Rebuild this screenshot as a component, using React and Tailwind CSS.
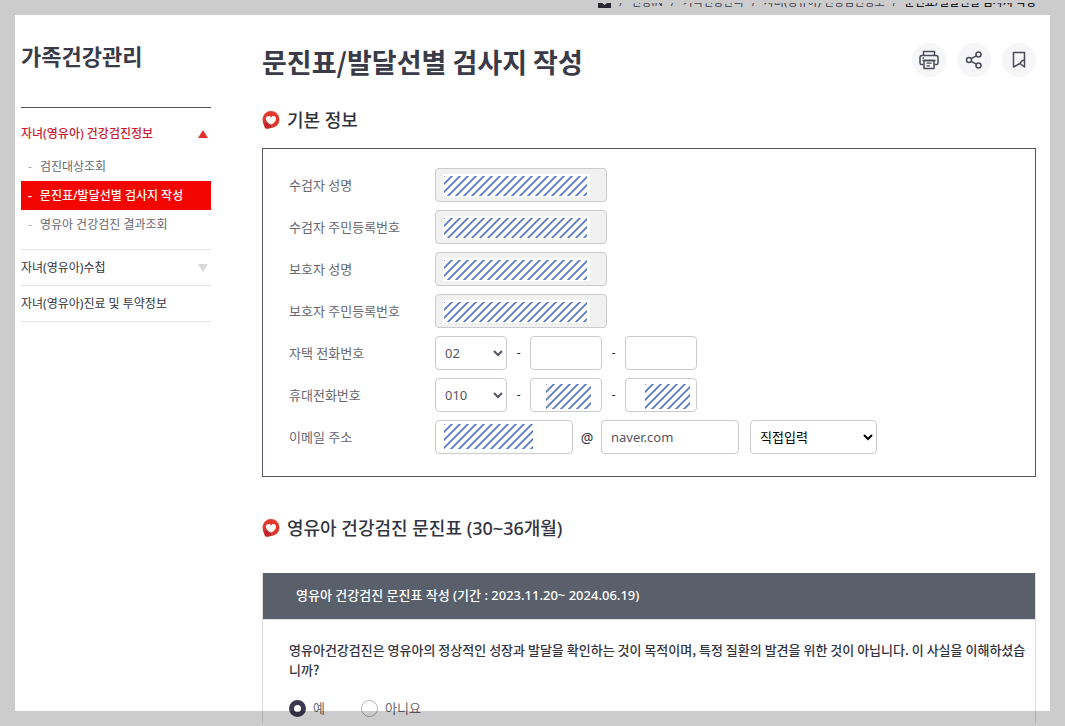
import React, { useId } from "react";

const SectionIcon = () => (
  <svg className="w-[18px] h-[18px] shrink-0" viewBox="0 0 18 18" aria-hidden="true">
    <circle cx="9" cy="8.6" r="8.5" fill="#df3a30" />
    <path d="M1.2 12L3 17.2C5.5 18.2 8 17.8 9.5 16L9 14L4.5 11Z" fill="#c3242b" />
    <path
      d="M9 13.6C5.8 12.2 4 10.2 4 7.8C4 6.1 5.1 5 6.6 5C7.7 5 8.6 5.6 9 6.5C9.4 5.6 10.3 5 11.4 5C12.9 5 14 6.1 14 7.8C14 10.2 12.2 12.2 9 13.6Z"
      fill="#fff"
    />
  </svg>
);

const PrintIcon = () => (
  <svg width="20" height="20" viewBox="0 0 20 20" fill="none" stroke="#4a4b5a" strokeWidth="1.5" strokeLinejoin="round">
    <path d="M4.5 5.5V1.5H15.5V5.5" />
    <path d="M4.5 14.5H2.5C1.5 14.5 1 14 1 13V7.5C1 6.3 1.7 5.5 3 5.5H17C18.3 5.5 19 6.3 19 7.5V13C19 14 18.5 14.5 17.5 14.5H15.5" />
    <path d="M5 10.5H15V18.5H5Z" />
    <path d="M3.5 10.5H16.5M7.5 13.2H12.5M7.5 15.8H11M3.5 8H5" strokeWidth="1.3" />
  </svg>
);

const ShareIcon = () => (
  <svg width="18" height="18" viewBox="0 0 18 18" fill="none" stroke="#4a4b5a" strokeWidth="1.5">
    <circle cx="4" cy="9" r="2.5" />
    <circle cx="13.5" cy="3.5" r="2.5" />
    <circle cx="13.5" cy="14.5" r="2.5" />
    <path d="M6.2 7.7L11.3 4.8M6.2 10.3L11.3 13.2" />
  </svg>
);

const BookmarkIcon = () => (
  <svg width="18" height="18" viewBox="0 0 18 18" fill="none" stroke="#4a4b5a" strokeWidth="1.5" strokeLinejoin="round">
    <path d="M3.5 1.5H14.5V16L10 12.5L3.5 16Z" />
    <path d="M14.5 9C12.5 9 11 10.5 10 12.5" />
  </svg>
);

const tools = [
  { label: "인쇄", icon: <PrintIcon /> },
  { label: "공유", icon: <ShareIcon /> },
  { label: "북마크", icon: <BookmarkIcon /> },
];

const crumbs = ["건강iN", "가족건강관리", "자녀(영유아) 건강검진정보"];

const subMenu = [
  { label: "검진대상조회" },
  { label: "문진표/발달선별 검사지 작성", active: true },
  { label: "영유아 건강검진 결과조회" },
];

const lockedFields = ["수검자 성명", "수검자 주민등록번호", "보호자 성명", "보호자 주민등록번호"];

const FIELD = "h-[34px] border border-[#cbcbcd] rounded text-[13px] text-[#55565f]";

const Hatch = ({ className }) => {
  const id = useId();
  return (
    <svg className={`absolute pointer-events-none ${className}`} aria-hidden="true">
      <pattern id={id} width="8" height="8" patternUnits="userSpaceOnUse">
        <path d="M-2 2L2 -2M-1 9L9 -1M6 10L10 6" stroke="#5b7cc8" strokeWidth="1.9" />
      </pattern>
      <rect width="100%" height="100%" fill={`url(#${id})`} />
    </svg>
  );
};

const Row = ({ label, htmlFor, children }) => (
  <div className="flex items-center">
    <label htmlFor={htmlFor} className="w-[146px] shrink-0 text-[13px] leading-5 text-[#66676f]">
      {label}
    </label>
    {children}
  </div>
);

const PhoneRow = ({ label, id, code, masked }) => (
  <Row label={label} htmlFor={id}>
    <select id={id} className={`${FIELD} w-[72px] pl-[5px] pr-0 bg-white`}>
      <option>{code}</option>
    </select>
    <span className="w-[23px] text-center text-[13px] text-[#33343f]">-</span>
    <div className="relative">
      <input aria-label={`${label} 가운데 자리`} className={`${FIELD} block w-[72px] px-2 bg-white`} />
      {masked && <Hatch className="left-4 top-1.5 w-[45px] h-[25px]" />}
    </div>
    <span className="w-[23px] text-center text-[13px] text-[#33343f]">-</span>
    <div className="relative">
      <input aria-label={`${label} 끝자리`} className={`${FIELD} block w-[72px] px-2 bg-white`} />
      {masked && <Hatch className="left-5 top-1.5 w-[45px] h-[25px]" />}
    </div>
  </Row>
);

const SectionTitle = ({ children }) => (
  <h2 className="flex items-center gap-[7px] text-[18px] leading-[26px] font-medium text-[#33343f]">
    <SectionIcon />
    {children}
  </h2>
);

const Sidebar = () => (
  <aside className="w-[190px] shrink-0">
    <h2 className="text-[22px] leading-[26px] font-bold text-[#3a3b48]">가족건강관리</h2>
    <ul className="mt-[38px] border-t border-[#55565f] text-[12px] text-[#33343f]">
      <li className="pt-4 pb-2.5 border-b border-[#e3e3e3]">
        <a href="#checkup" className="flex items-center justify-between pr-[3px] leading-5 font-medium text-[#cc1a33]">
          자녀(영유아) 건강검진정보
          <svg width="10" height="8" viewBox="0 0 10 8" aria-hidden="true">
            <path d="M5 0L10 8H0Z" fill="#e0352f" />
          </svg>
        </a>
        <ul className="mt-2">
          {subMenu.map(({ label, active }) => (
            <li key={label}>
              <a
                href="#sub"
                className={`flex h-[29px] items-center gap-2 pl-[7px] ${active ? "bg-[#f40600] font-medium text-white" : "text-[#66676f]"}`}
              >
                <span className={active ? "text-white" : "text-[#aaaaaf]"}>-</span>
                {label}
              </a>
            </li>
          ))}
        </ul>
      </li>
      <li className="border-b border-[#e3e3e3]">
        <a href="#note" className="flex h-[35px] items-center justify-between pr-[3px]">
          자녀(영유아)수첩
          <svg width="10" height="8" viewBox="0 0 10 8" aria-hidden="true">
            <path d="M0 0H10L5 8Z" fill="#d9d9d9" />
          </svg>
        </a>
      </li>
      <li className="border-b border-[#e3e3e3]">
        <a href="#care" className="flex h-[35px] items-center">
          자녀(영유아)진료 및 투약정보
        </a>
      </li>
    </ul>
  </aside>
);

const Breadcrumb = () => (
  <nav aria-label="현재 위치" className="-mt-[9px] flex h-4 items-center justify-end gap-2 text-[11px] leading-4 text-[#4a4b5a]">
    <svg width="13" height="12" viewBox="0 0 13 12" aria-label="홈">
      <path d="M6.5 0L13 5V12H0V5ZM4 5V7L6.5 9L9 7V5Z" fill="#33343f" fillRule="evenodd" />
    </svg>
    {crumbs.map((name) => (
      <React.Fragment key={name}>
        <span>/</span>
        <a href="#path">{name}</a>
      </React.Fragment>
    ))}
    <span>/</span>
    <strong className="font-medium text-[#22232c]">문진표/발달선별 검사지 작성</strong>
  </nav>
);

const BasicInfo = () => (
  <form className="mt-[15px] flex flex-col gap-2 border border-[#55565f] pt-[19px] pb-[22px] px-[26px]">
    {lockedFields.map((label, i) => (
      <Row key={label} label={label} htmlFor={`locked-${i}`}>
        <div className="relative">
          <input id={`locked-${i}`} readOnly className={`${FIELD} block w-[172px] bg-[#f1f1f1]`} />
          <div className="absolute left-2 top-1.5 w-[147px] h-[23px] bg-white pointer-events-none" />
          <Hatch className="left-[9px] top-2 w-[143px] h-5" />
        </div>
      </Row>
    ))}
    <PhoneRow label="자택 전화번호" id="home-tel" code="02" />
    <PhoneRow label="휴대전화번호" id="mobile" code="010" masked />
    <Row label="이메일 주소" htmlFor="email">
      <div className="relative">
        <input id="email" className={`${FIELD} block w-[138px] px-2 bg-white`} />
        <Hatch className="left-[9px] top-1 w-[89px] h-[25px]" />
      </div>
      <span className="w-7 text-center text-[14px] text-[#33343f]">@</span>
      <input aria-label="이메일 도메인" defaultValue="naver.com" className={`${FIELD} w-[138px] px-[9px] bg-white`} />
      <select aria-label="도메인 선택" className={`${FIELD} ml-[11px] w-[127px] pl-[5px] pr-0 bg-white text-black`}>
        <option>직접입력</option>
      </select>
    </Row>
  </form>
);

const RadioOption = ({ label, defaultChecked }) => (
  <label className="flex items-center gap-[7px] text-[13px] leading-[18px] text-[#66676f]">
    <input
      type="radio"
      name="understood"
      defaultChecked={defaultChecked}
      className="appearance-none w-[17px] h-[17px] rounded-full border border-[#b4b4b8] bg-white checked:border-[5px] checked:border-[#3c3a50]"
    />
    {label}
  </label>
);

const Questionnaire = () => (
  <section className="mt-8 border-x border-[#dddde2]">
    <h3 className="flex h-[46px] items-center bg-[#59606c] px-[33px] text-[13px] font-medium text-white">
      영유아 건강검진 문진표 작성 (기간 : 2023.11.20~ 2024.06.19)
    </h3>
    <fieldset aria-labelledby="question-1" className="border-t border-[#dddde2] pt-5 pb-10 pl-[26px] pr-1">
      <p id="question-1" className="font-['Noto_Sans_CJK_KR',sans-serif] text-[13px] leading-5 font-medium break-all text-[#33343f]">
        영유아건강검진은 영유아의 정상적인 성장과 발달을 확인하는 것이 목적이며, 특정 질환의 발견을 위한 것이 아닙니다. 이 사실을 이해하셨습니까?
      </p>
      <div className="mt-[19px] flex gap-9">
        <RadioOption label="예" defaultChecked />
        <RadioOption label="아니요" />
      </div>
    </fieldset>
  </section>
);

const App = () => {
  return (
    <div className="relative flex h-screen flex-col overflow-hidden bg-white py-[3px] font-['Noto_Sans','Noto_Sans_CJK_KR',sans-serif]">
      <div className="min-h-0 flex-1 overflow-hidden pl-[21px] pr-[29px]">
        <Breadcrumb />
        <div className="flex gap-[51px] pt-[33px]">
          <Sidebar />
          <main className="min-w-0 flex-1">
            <header className="flex items-start justify-between">
              <h1 className="font-['Noto_Sans_CJK_KR',sans-serif] text-[27px] leading-[38px] font-bold text-[#3a3b48]">
                문진표/발달선별 검사지 작성
              </h1>
              <div className="flex gap-[11px]">
                {tools.map(({ label, icon }) => (
                  <button key={label} type="button" aria-label={label} className="flex h-[34px] w-[34px] items-center justify-center rounded-full bg-[#f6f6f8]">
                    {icon}
                  </button>
                ))}
              </div>
            </header>
            <div className="mt-[26px]">
              <SectionTitle>기본 정보</SectionTitle>
            </div>
            <BasicInfo />
            <div className="mt-[38px]">
              <SectionTitle>영유아 건강검진 문진표 (30~36개월)</SectionTitle>
            </div>
            <Questionnaire />
          </main>
        </div>
      </div>
      {/* dimmed frame around the page edge */}
      <div className="pointer-events-none absolute inset-0 border-[15px] border-black/20" />
    </div>
  );
};

export default App;
